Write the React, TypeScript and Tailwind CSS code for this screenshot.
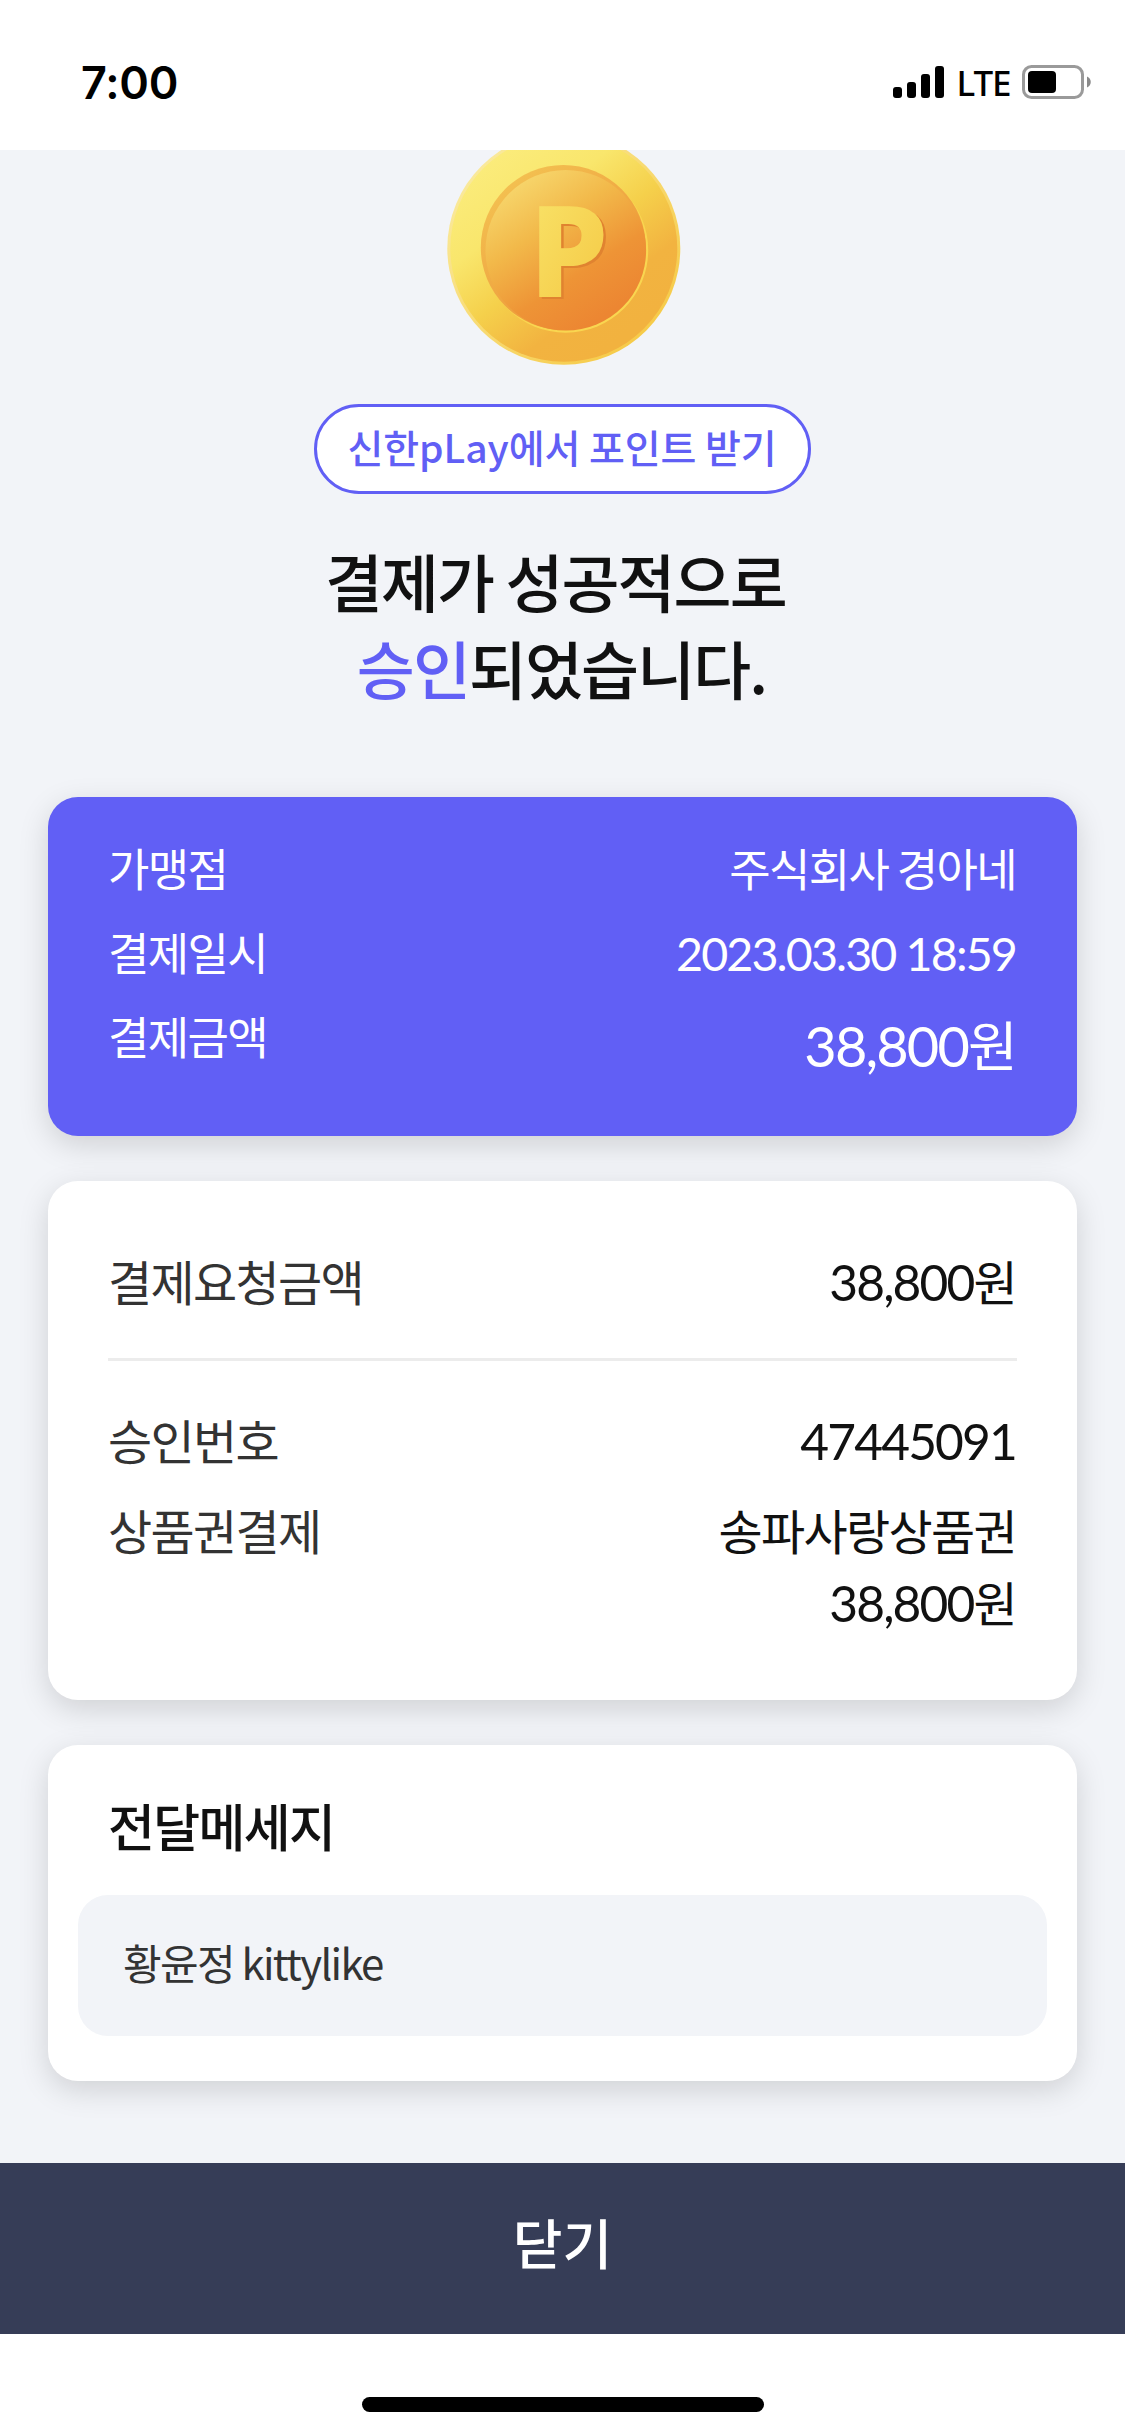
import type { ReactNode } from 'react';
import clsx from 'clsx';

interface RowProps {
  label: string;
  children: ReactNode;
  className?: string;
  labelClassName?: string;
}

// Digits use Lato, slightly larger than the Korean text beside them
function Num({ children }: { children: ReactNode }) {
  return <span className="font-['Lato'] text-[1.035em] leading-none tracking-[-1.85px]">{children}</span>;
}

function Row({ label, children, className, labelClassName }: RowProps) {
  return (
    <div className={clsx('flex items-start justify-between', className)}>
      <span className={labelClassName}>{label}</span>
      <div className="pr-px text-right">{children}</div>
    </div>
  );
}

function StatusBar() {
  return (
    <header className="flex h-[150px] shrink-0 items-center justify-between bg-white pt-[14px] pr-[33px] pl-[81px] text-black">
      <span className="font-['Inter'] text-[45px] leading-none font-semibold tracking-[-0.2px]">7:00</span>
      <div className="flex items-center">
        <svg width="52" height="32" viewBox="0 0 52 32">
          <rect x="0" y="21" width="9" height="11" rx="3" />
          <rect x="14" y="16" width="9" height="16" rx="3" />
          <rect x="28" y="8" width="9" height="24" rx="3" />
          <rect x="42" y="0" width="9" height="32" rx="3" />
        </svg>
        <span className="w-[77px] text-center font-['Noto_Sans'] text-[35px] leading-none font-medium tracking-[-1px]">
          LTE
        </span>
        <svg width="70" height="34" viewBox="0 0 70 34">
          <rect x="1.5" y="1.5" width="59" height="31" rx="8" fill="none" stroke="#9a9a9a" strokeWidth="3" />
          <rect x="6" y="6" width="28" height="22" rx="4" />
          <path d="M65 11.5c5 2 5 9 0 11z" fill="#8a8a8a" />
        </svg>
      </div>
    </header>
  );
}

function Coin() {
  return (
    <svg className="-mt-[18px] shrink-0" width="236" height="234" viewBox="0 0 236 234">
      <defs>
        <linearGradient id="rim" x1="0.15" y1="0.1" x2="0.75" y2="0.9">
          <stop offset="0" stopColor="#fbec7c" />
          <stop offset="0.3" stopColor="#f9e66c" />
          <stop offset="0.55" stopColor="#f5d04b" />
          <stop offset="0.8" stopColor="#f2b340" />
          <stop offset="1" stopColor="#f2b23f" />
        </linearGradient>
        <linearGradient id="edge" x1="0.1" y1="0.1" x2="0.85" y2="0.85">
          <stop offset="0" stopColor="#faeba0" />
          <stop offset="1" stopColor="#f6cb4a" />
        </linearGradient>
        <linearGradient id="groove" x1="0.2" y1="0.1" x2="0.8" y2="0.9">
          <stop offset="0" stopColor="#f3bf50" />
          <stop offset="1" stopColor="#ec9035" />
        </linearGradient>
        <linearGradient id="face" x1="0.2" y1="0.05" x2="0.75" y2="0.9">
          <stop offset="0" stopColor="#f7d76d" />
          <stop offset="0.35" stopColor="#f2b94a" />
          <stop offset="0.7" stopColor="#ee9436" />
          <stop offset="1" stopColor="#ec8632" />
        </linearGradient>
        <linearGradient id="letter" x1="0" y1="0" x2="0.7" y2="1">
          <stop offset="0" stopColor="#f9e66d" />
          <stop offset="1" stopColor="#f5c945" />
        </linearGradient>
      </defs>
      <circle cx="118.8" cy="116.3" r="116.5" fill="url(#edge)" />
      <circle cx="118.8" cy="116.3" r="113.5" fill="url(#rim)" />
      <circle cx="120.7" cy="118.2" r="82.5" fill="#f9d650" />
      <circle cx="118.3" cy="115.5" r="82.5" fill="url(#groove)" />
      <circle cx="120.8" cy="118.3" r="80.3" fill="url(#face)" />
      <g className="font-['Noto_Sans'] text-[127px] font-extrabold">
        <text x="86.5" y="166.5" fill="#e08330">P</text>
        <text x="84" y="165" fill="url(#letter)">P</text>
      </g>
    </svg>
  );
}

export default function App() {
  const card = 'w-full shrink-0 rounded-[30px] shadow-[0_9px_30px_rgba(0,0,0,0.145)]';

  return (
    <div className="flex h-[2436px] w-[1125px] flex-col overflow-hidden bg-white font-['Noto_Sans_CJK_KR',sans-serif] tracking-[-1.65px] text-[#111]">
      <StatusBar />

      <main className="flex h-[2013px] shrink-0 flex-col items-center overflow-hidden bg-[#f2f4f8] px-[48px]">
        <Coin />

        <div className="mt-[38px] flex h-[90px] w-[497px] shrink-0 items-center justify-center rounded-full border-3 border-[#615ff5] bg-white pr-px pb-[5px] text-[39px] font-medium tracking-[-0.1px] text-[#615ff5]">
          신한pLay에서 포인트 받기
        </div>

        <h1 className="mt-[42px] pr-[2px] text-center text-[63px] leading-[87px] font-medium tracking-[-1.9px]">
          결제가 성공적으로&nbsp;
          <br />
          <span className="text-[#615ff5]">승인</span>되었습니다.
        </h1>

        {/* Payment summary */}
        <section className={clsx(card, 'mt-[87px] h-[339px] bg-[#615ff5] px-[60px] pt-[37px] text-[45px] leading-[68px] text-white')}>
          <Row label="가맹점">주식회사 경아네</Row>
          <Row label="결제일시" className="mt-[16px]">
            <Num>2023.03.30 18:59</Num>
          </Row>
          <Row label="결제금액" className="mt-[16px]">
            <div className="pt-px text-[54px] leading-[81px]">
              <Num>38,800</Num>원
            </div>
          </Row>
        </section>

        {/* Approval detail */}
        <section className={clsx(card, 'mt-[45px] h-[519px] bg-white px-[60px] pt-[63px] text-[48px] leading-[72px]')}>
          <Row label="결제요청금액" labelClassName="text-[#333]" className="border-b-3 border-[#ececec] pb-[42px]">
            <Num>38,800</Num>원
          </Row>
          <Row label="승인번호" labelClassName="text-[#333]" className="mt-[42px]">
            <Num>47445091</Num>
          </Row>
          <Row label="상품권결제" labelClassName="text-[#333]" className="mt-[18px]">
            송파사랑상품권
            <br />
            <Num>38,800</Num>원
          </Row>
        </section>

        {/* Message */}
        <section className={clsx(card, 'mt-[45px] h-[336px] bg-white px-[30px] pt-[42px]')}>
          <h2 className="px-[30px] text-[51px] leading-[76px] font-medium">전달메세지</h2>
          <p className="mt-[32px] flex h-[141px] items-center rounded-[30px] bg-[#f2f4f8] px-[45px] pb-[9px] text-[42px] tracking-[-1.7px] text-[#333]">
            황윤정 kittylike
          </p>
        </section>
      </main>

      <button className="h-[171px] shrink-0 bg-[#363d57] pb-[14px] text-[54px] font-medium tracking-normal text-white">
        닫기
      </button>
      <div className="mt-[63px] ml-[362px] h-[15px] w-[402px] rounded-full bg-black" />
    </div>
  );
}
